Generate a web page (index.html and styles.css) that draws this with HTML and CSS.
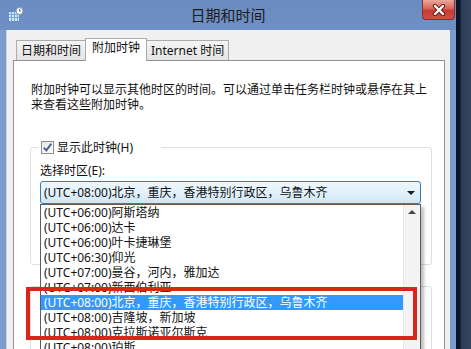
FILE: index.html
```html
<!DOCTYPE html>
<html lang="zh-CN">
<head>
    <meta charset="UTF-8">
    <title>日期和时间</title>
    <link rel="stylesheet" href="styles.css">
</head>
<body>
    <div class="screen">
        <div class="window">
            <div class="titlebar">
                <svg class="app-icon" width="16" height="16" viewBox="0 0 16 16">
                    <rect x="0.5" y="4.5" width="11" height="10" fill="#d6e8f7" stroke="#5f8fc4"/>
                    <path d="M0.5 7.5h11M0.5 10.5h11M3.5 4.5v10M6.5 4.5v10M9.5 4.5v10" stroke="#7aa6d6" stroke-width="1"/>
                    <circle cx="11.5" cy="4" r="3.5" fill="#fff" stroke="#8c99a8"/>
                    <path d="M11.5 2v2h1.6" stroke="#4a5a6e" stroke-width="0.9" fill="none"/>
                </svg>
                <div class="title">日期和时间</div>
                <div class="close">
                    <svg width="14" height="12" viewBox="0 0 14 12">
                        <path d="M3 2l8 8M11 2l-8 8" stroke="#6e1d16" stroke-width="4.4" stroke-linecap="round"/>
                        <path d="M3 2l8 8M11 2l-8 8" stroke="#fff" stroke-width="2.4" stroke-linecap="round"/>
                    </svg>
                </div>
            </div>
            <div class="client">
                <div class="tabs">
                    <div class="tab">日期和时间</div>
                    <div class="tab active">附加时钟</div>
                    <div class="tab">Internet 时间</div>
                </div>
                <div class="panel">
                    <p class="intro">附加时钟可以显示其他时区的时间。可以通过单击任务栏时钟或悬停在其上来查看这些附加时钟。</p>

                    <fieldset class="group">
                        <legend>
                            <span class="check-row">
                                <span class="checkbox">
                                    <svg width="11" height="11" viewBox="0 0 11 11"><path d="M1.8 5.6l2.6 2.8 4.8-6.6" stroke="#4b5f86" stroke-width="1.9" fill="none"/></svg>
                                </span>
                                显示此时钟(H)
                            </span>
                        </legend>
                        <div class="field-label">选择时区(E):</div>
                        <div class="combo">
                            <div class="combo-box">
                                (UTC+08:00)北京，重庆，香港特别行政区，乌鲁木齐
                                <span class="arrow"></span>
                            </div>
                            <div class="dropdown">
                                <ul class="options">
                                    <li>(UTC+06:00)阿斯塔纳</li>
                                    <li>(UTC+06:00)达卡</li>
                                    <li>(UTC+06:00)叶卡捷琳堡</li>
                                    <li>(UTC+06:30)仰光</li>
                                    <li>(UTC+07:00)曼谷，河内，雅加达</li>
                                    <li>(UTC+07:00)新西伯利亚</li>
                                    <li class="selected">(UTC+08:00)北京，重庆，香港特别行政区，乌鲁木齐</li>
                                    <li>(UTC+08:00)吉隆坡，新加坡</li>
                                    <li>(UTC+08:00)克拉斯诺亚尔斯克</li>
                                    <li>(UTC+08:00)珀斯</li>
                                </ul>
                                <div class="scrollbar"><span class="up"></span></div>
                            </div>
                        </div>
                    </fieldset>

                    <fieldset class="group second"></fieldset>
                </div>
            </div>
        </div>
        <div class="desktop"></div>
        <div class="mark"></div>
    </div>
</body>
</html>
```

FILE: styles.css
```css
* {
    margin: 0;
    padding: 0;
    box-sizing: border-box;
}

body {
    width: 471px;
    height: 349px;
    overflow: hidden;
    font-family: "Noto Sans", "Noto Sans CJK SC", sans-serif;
    font-size: 12px;
    color: #111;
    background: #22344e;
}

.screen {
    position: relative;
    display: flex;
    height: 349px;
}

.window {
    width: 456px;
    display: flex;
    flex-direction: column;
    background: #7c9acb;
}

.titlebar {
    height: 30px;
    display: grid;
    grid-template-columns: 1fr auto 1fr;
    background: linear-gradient(#6a8bbf, #6f90c4);
}

.app-icon {
    margin: 7px 0 0 8px;
}

.title {
    font-size: 15px;
    line-height: 30px;
    color: #1c1c1c;
}

.close {
    justify-self: end;
    width: 33px;
    height: 20px;
    margin-right: 1px;
    display: flex;
    align-items: center;
    justify-content: center;
    border: 1px solid #8e2d24;
    border-top: none;
    border-radius: 0 0 4px 4px;
    background: linear-gradient(#eaa79c 0%, #d9665a 45%, #c63d31 55%, #cf4f42 100%);
}

.client {
    flex: 1;
    display: flex;
    flex-direction: column;
    margin: 0 6px;
    padding: 8px 5px 0 7px;
    background: #f0f0f0;
    box-shadow: inset 1px 0 0 #c9d3e2;
}

.tabs {
    display: flex;
    align-items: flex-end;
    height: 22px;
    padding-left: 3px;
}

.tab {
    height: 20px;
    padding: 0 4px;
    line-height: 19px;
    border: 1px solid #acacac;
    border-bottom: none;
    background: linear-gradient(#f4f4f4, #e4e4e4);
    white-space: nowrap;
}

.tab + .tab {
    margin-left: -1px;
}

.tab.active {
    height: 23px;
    margin-bottom: -1px;
    padding: 0 6px;
    line-height: 18px;
    background: #fff;
    position: relative;
    z-index: 1;
}

.panel {
    flex: 1;
    border: 1px solid #8f9296;
    background: #fff;
    padding: 21px 12px 0 16px;
}

.intro {
    width: 400px;
    margin-left: 1px;
    line-height: 15px;
}

.group {
    margin-top: 28px;
    padding: 8px 10px 60px 9px;
    min-inline-size: 0;
    border: 1px solid #dadfe4;
    border-radius: 3px;
}

.group.second {
    margin-top: 21px;
    height: 80px;
    padding: 0;
}

.group legend {
    margin-left: -2px;
    padding: 0 28px 0 3px;
    line-height: 15px;
}

.check-row {
    display: flex;
    align-items: center;
    gap: 3px;
}

.checkbox {
    width: 13px;
    height: 13px;
    display: flex;
    align-items: center;
    justify-content: center;
    border: 1px solid #8b8e93;
    background: linear-gradient(#e6e8ea, #fafafa);
}

.field-label {
    line-height: 15px;
}

.combo {
    position: relative;
    margin-top: 3px;
    width: 381px;
}

.combo-box {
    position: relative;
    height: 23px;
    padding-left: 3px;
    line-height: 21px;
    border: 1px solid #3d7bad;
    border-radius: 3px;
    background: linear-gradient(#eef7fd 0%, #e2f1fb 50%, #cfe7f8 100%);
}

.arrow {
    position: absolute;
    right: 5px;
    top: 9px;
    border-left: 4px solid transparent;
    border-right: 4px solid transparent;
    border-top: 4px solid #1a1a1a;
}

.dropdown {
    position: absolute;
    top: 23px;
    left: 0;
    width: 381px;
    height: 160px;
    display: flex;
    border: 1px solid #5e5e5e;
    background: #fff;
    box-shadow: 3px 3px 3px rgba(0, 0, 0, 0.25);
    z-index: 3;
}

.options {
    flex: 1;
    list-style: none;
}

.options li {
    height: 15px;
    padding-left: 3px;
    line-height: 15px;
    white-space: nowrap;
}

.options li.selected {
    background: #3399ff;
    color: #fff;
}

.scrollbar {
    width: 17px;
    display: flex;
    justify-content: center;
    background: #f3f3f3;
    border-left: 1px solid #e6e6e6;
}

.scrollbar .up {
    margin-top: 5px;
    width: 0;
    height: 0;
    border-left: 4px solid transparent;
    border-right: 4px solid transparent;
    border-bottom: 4px solid #444;
}

.desktop {
    flex: 1;
    background: linear-gradient(90deg, #0b1629 0, #0b1629 4px, #2a3c56 5px, #34475f 100%);
}

.mark {
    position: absolute;
    left: 26px;
    top: 287px;
    width: 391px;
    height: 53px;
    border: 4px solid #d9261d;
    z-index: 5;
}
```
